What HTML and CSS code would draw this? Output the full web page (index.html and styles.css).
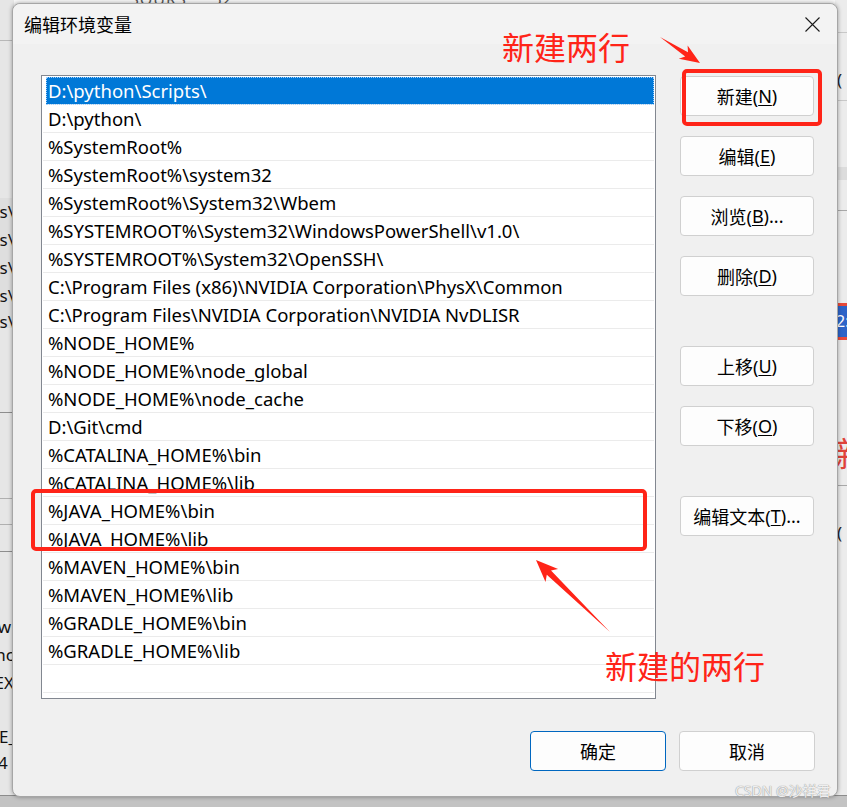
FILE: index.html
```html
<!DOCTYPE html>
<html lang="zh-CN">
<head>
<meta charset="utf-8">
<title>编辑环境变量</title>
<link rel="stylesheet" href="styles.css">
</head>
<body>
<div class="desktop">
  <div class="bg-top"><span class="bg-top-text">SOURS&nbsp;&nbsp;&nbsp;&nbsp;&nbsp;32</span></div>
  <div class="bg-left">
    <div class="bg-left-line l1"></div>
    <div class="bg-left-band b1"></div>
    <div class="bg-left-line l2"></div>
    <div class="bg-left-line l3"></div>
    <div class="bg-left-line l4"></div>
    <div class="bg-left-line l5"></div>
    <span class="frag f1">rs\</span>
    <span class="frag f2">rs\</span>
    <span class="frag f3">rs\</span>
    <span class="frag f4">rs\</span>
    <span class="frag f5">rs\</span>
    <span class="frag f6">w</span>
    <span class="frag f7">nc</span>
    <span class="frag f8">EX</span>
    <span class="frag f9">E_</span>
    <span class="frag f10">4</span>
    <span class="frag f11">F</span>
  </div>
  <div class="bg-right">
    <div class="bg-right-line r1"></div>
    <div class="bg-right-line r2"></div>
    <div class="bg-right-line r3"></div>
    <div class="bg-right-line r4"></div>
    <div class="bg-right-line r5"></div>
    <span class="rfrag rf1">(</span>
    <div class="rbadge">2:</div>
    <span class="rfrag rf2">新</span>
    <span class="rfrag rf3">(</span>
  </div>
  <div class="bg-bottom"></div>

  <div class="dialog">
    <div class="titlebar">
      <span class="title">编辑环境变量</span>
      <div class="close">
        <svg width="15" height="15" viewBox="0 0 15 15"><path d="M0.5 0.5 L14.5 14.5 M14.5 0.5 L0.5 14.5" stroke="#1a1a1a" stroke-width="1.1" fill="none"/></svg>
      </div>
    </div>
    <div class="content">
      <div class="listbox">
        <div class="row selected">D:\python\Scripts\</div>
        <div class="row">D:\python\</div>
        <div class="row">%SystemRoot%</div>
        <div class="row">%SystemRoot%\system32</div>
        <div class="row">%SystemRoot%\System32\Wbem</div>
        <div class="row">%SYSTEMROOT%\System32\WindowsPowerShell\v1.0\</div>
        <div class="row">%SYSTEMROOT%\System32\OpenSSH\</div>
        <div class="row">C:\Program Files (x86)\NVIDIA Corporation\PhysX\Common</div>
        <div class="row">C:\Program Files\NVIDIA Corporation\NVIDIA NvDLISR</div>
        <div class="row">%NODE_HOME%</div>
        <div class="row">%NODE_HOME%\node_global</div>
        <div class="row">%NODE_HOME%\node_cache</div>
        <div class="row">D:\Git\cmd</div>
        <div class="row">%CATALINA_HOME%\bin</div>
        <div class="row">%CATALINA_HOME%\lib</div>
        <div class="row">%JAVA_HOME%\bin</div>
        <div class="row">%JAVA_HOME%\lib</div>
        <div class="row">%MAVEN_HOME%\bin</div>
        <div class="row">%MAVEN_HOME%\lib</div>
        <div class="row">%GRADLE_HOME%\bin</div>
        <div class="row">%GRADLE_HOME%\lib</div>
        <div class="row empty"></div>
      </div>
      <div class="side">
        <button class="btn">新建(<u>N</u>)</button>
        <button class="btn">编辑(<u>E</u>)</button>
        <button class="btn">浏览(<u>B</u>)...</button>
        <button class="btn">删除(<u>D</u>)</button>
        <button class="btn spaced">上移(<u>U</u>)</button>
        <button class="btn">下移(<u>O</u>)</button>
        <button class="btn spaced">编辑文本(<u>T</u>)...</button>
      </div>
    </div>
    <div class="footer">
      <button class="btn wide primary">确定</button>
      <button class="btn wide">取消</button>
    </div>
  </div>

  <div class="note note-top">新建两行</div>
  <div class="note note-bottom">新建的两行</div>
  <div class="redbox box-new"></div>
  <div class="redbox box-java"></div>
  <svg class="arrows" width="847" height="807" viewBox="0 0 847 807">
    <polygon points="660,37 685.2,56.4 678.8,58.8 700,63 687.6,45.4 688.0,52.2" fill="#ff2418"/>
    <polygon points="610,632 551.0,570.4 558.1,568.9 536,560 545.5,581.9 546.8,574.8" fill="#ff2418"/>
  </svg>
  <div class="watermark">CSDN @沙祥君</div>
</div>
</body>
</html>
```

FILE: styles.css
```css
* { box-sizing: border-box; }
html, body { margin: 0; padding: 0; }
body {
  width: 847px;
  height: 807px;
  overflow: hidden;
  background: #e9e9e9;
  font-family: "Noto Sans", "Noto Sans CJK SC", sans-serif;
  color: #000;
}
.desktop {
  position: relative;
  width: 847px;
  height: 807px;
  overflow: hidden;
}

/* background window fragments */
.bg-top {
  position: absolute;
  left: 0; top: 0;
  width: 847px; height: 12px;
  background: #f7f7f7;
  overflow: hidden;
}
.bg-top-text {
  position: absolute;
  left: 130px; top: -12px;
  font-size: 16px;
  color: #555;
  letter-spacing: 1px;
}
.bg-left {
  position: absolute;
  left: 0; top: 0;
  width: 14px; height: 807px;
  background: #e6e6e6;
  overflow: hidden;
}
.bg-left-line { position: absolute; left: 0; width: 14px; height: 1px; background: #8e8e8e; }
.l1 { top: 40px; background: #b8b8b8; }
.l2 { top: 412px; }
.l3 { top: 498px; background: #b0b0b0; }
.l4 { top: 524px; background: #b0b0b0; }
.l5 { top: 551px; }
.bg-left-band { position: absolute; left: 0; width: 14px; }
.b1 { top: 198px; height: 130px; background: #dedede; }
.frag {
  position: absolute;
  font-size: 17px;
  line-height: 20px;
  color: #111;
  white-space: nowrap;
}
.f1, .f2, .f3, .f4, .f5 { right: 0px; }
.f1 { top: 202px; }
.f2 { top: 230px; }
.f3 { top: 258px; }
.f4 { top: 286px; }
.f5 { top: 312px; }
.f6 { top: 617px; right: 3px; }
.f7 { top: 645px; right: 0px; }
.f8 { top: 673px; right: 0px; }
.f9 { top: 727px; right: -2px; }
.f10 { top: 753px; left: -2px; }
.f11 { top: 780px; left: 18px; }

.bg-right {
  position: absolute;
  right: 0; top: 0;
  width: 12px; height: 807px;
  background: #ececec;
  overflow: hidden;
}
.bg-right-line { position: absolute; left: 0; width: 12px; height: 1px; background: #c8c8c8; }
.r1 { top: 32px; }
.r2 { top: 100px; }
.r3 { top: 167px; height: 13px; background: #dcdcdc; }
.r4 { top: 210px; background: #a8a8a8; }
.r5 { top: 485px; background: #a8a8a8; }
.rfrag {
  position: absolute;
  left: 2px;
  font-size: 17px;
  line-height: 20px;
  color: #222;
}
.rf1 { top: 70px; }
.rf2 { top: 434px; left: 0; font-size: 34px; line-height: 40px; color: #e0433a; }
.rf3 { top: 523px; }
.rbadge {
  position: absolute;
  left: 1px; top: 303px;
  width: 20px; height: 37px;
  background: #2d64c8;
  border-top: 3px solid #e84a3a;
  border-bottom: 3px solid #e84a3a;
  color: #fff;
  font-size: 16px;
  line-height: 30px;
}
.bg-bottom {
  position: absolute;
  left: 0; bottom: 0;
  width: 847px; height: 12px;
  background: #c3c3c3;
  border-top: 1px solid #8c8c8c;
}

/* dialog window */
.dialog {
  position: absolute;
  left: 12px; top: 3px;
  width: 826px; height: 794px;
  background: #f0f0f0;
  border: 1px solid #a6a6a6;
  border-radius: 8px;
  box-shadow: 0 0 4px rgba(0,0,0,0.35);
  display: flex;
  flex-direction: column;
  z-index: 2;
}
.titlebar {
  height: 40px;
  display: flex;
  align-items: center;
  justify-content: space-between;
  padding-left: 11px;
  background: #f3f3f3;
  border-radius: 8px 8px 0 0;
}
.title {
  font-family: "Noto Sans CJK SC", sans-serif;
  font-size: 18px;
  color: #000;
}
.close {
  width: 50px;
  height: 40px;
  display: flex;
  align-items: center;
  justify-content: center;
}
.content {
  display: flex;
  margin-top: 31px;
  padding-left: 28px;
}
.listbox {
  width: 615px;
  height: 624px;
  background: #fff;
  border: 1px solid #828790;
  padding: 1px 1px 0 1px;
  overflow: hidden;
}
.row {
  height: 28px;
  line-height: 27px;
  padding-left: 5px;
  font-size: 18.5px;
  color: #000;
  border-bottom: 1px solid #ebebeb;
  white-space: nowrap;
}
.row.selected {
  background: #0078d7;
  color: #fff;
  margin-left: 3px;
  padding-left: 2px;
  outline: 1px dotted #9fd0ff;
  outline-offset: -1px;
}
.side {
  display: flex;
  flex-direction: column;
  gap: 20px;
  margin-left: 24px;
  padding-top: 1px;
}
.btn {
  width: 134px;
  height: 40px;
  background: #fdfdfd;
  border: 1px solid #d0d0d0;
  border-radius: 4px;
  font-family: "Noto Sans", "Noto Sans CJK SC", sans-serif;
  font-size: 18px;
  color: #000;
  padding: 0;
  display: flex;
  align-items: center;
  justify-content: center;
}
.btn u { text-underline-offset: 2px; }
.side .spaced { margin-top: 30px; }
.footer {
  display: flex;
  justify-content: flex-end;
  gap: 13px;
  margin-top: 32px;
  padding-right: 22px;
}
.btn.wide { width: 136px; }
.btn.primary { border: 1px solid #0067c0; }

/* annotations */
.note {
  position: absolute;
  font-family: "Noto Sans CJK SC", sans-serif;
  font-size: 32px;
  line-height: 40px;
  color: #ff2418;
  z-index: 3;
}
.note-top { left: 502px; top: 26px; }
.note-bottom { left: 605px; top: 645px; }
.redbox {
  position: absolute;
  border: 4px solid #ff2418;
  border-radius: 5px;
  z-index: 3;
}
.box-new { left: 682px; top: 69px; width: 140px; height: 57px; }
.box-java { left: 31px; top: 489px; width: 616px; height: 62px; }
.arrows {
  position: absolute;
  left: 0; top: 0;
  z-index: 3;
}
.watermark {
  position: absolute;
  left: 735px; top: 780px;
  font-family: "Noto Sans", "Noto Sans CJK SC", sans-serif;
  font-size: 14px;
  color: rgba(255,255,255,0.85);
  text-shadow: 0 0 1px #9a9a9a, 0 0 1px #9a9a9a;
  z-index: 4;
}
```
